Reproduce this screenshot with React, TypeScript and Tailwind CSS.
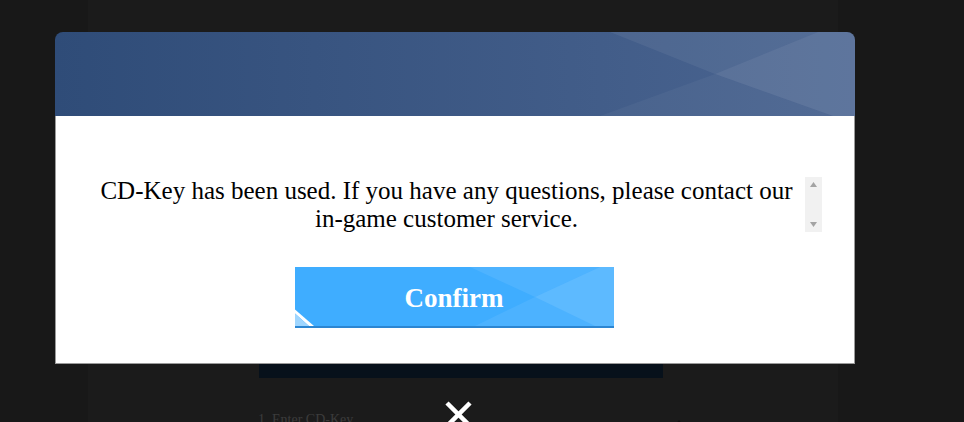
import React from 'react';

const serif = { fontFamily: '"Liberation Serif", "Times New Roman", serif' };

function HeaderPattern() {
  return (
    <svg className="absolute inset-0 h-full w-full" viewBox="0 0 800 84" preserveAspectRatio="none">
      <polygon points="555,0 763,0 660,42" fill="#ffffff" fillOpacity="0.06" />
      <polygon points="763,0 800,0 800,84 778,84 660,42" fill="#ffffff" fillOpacity="0.11" />
      <polygon points="545,84 778,84 660,42" fill="#ffffff" fillOpacity="0.04" />
    </svg>
  );
}

function ButtonPattern() {
  return (
    <svg className="absolute inset-0 h-full w-full" viewBox="0 0 319 61" preserveAspectRatio="none">
      <polygon points="175,0 305,0 240,31" fill="#ffffff" fillOpacity="0.08" />
      <polygon points="305,0 319,0 319,61 300,61 240,31" fill="#ffffff" fillOpacity="0.16" />
      <polygon points="180,61 300,61 240,31" fill="#ffffff" fillOpacity="0.07" />
      <polygon points="0,44 19,61 14,61 0,48" fill="#ffffff" />
      <polygon points="0,48 14,61 0,61" fill="#9fd6ff" />
    </svg>
  );
}

function FakeScrollbar() {
  return (
    <div className="flex h-[55px] w-[17px] shrink-0 flex-col items-center justify-between bg-[#f1f1f1] py-[5px]">
      <svg width="7" height="5" viewBox="0 0 7 5">
        <polygon points="3.5,0 7,5 0,5" fill="#a3a3a3" />
      </svg>
      <svg width="7" height="5" viewBox="0 0 7 5">
        <polygon points="0,0 7,0 3.5,5" fill="#a3a3a3" />
      </svg>
    </div>
  );
}

export default function App() {
  return (
    <div className="relative h-[422px] w-full overflow-hidden bg-[#181818]" style={serif}>
      {/* page behind the overlay */}
      <div className="ml-[88px] h-full w-[750px] bg-[#1b1b1b] pt-[240px]">
        <div className="ml-[171px] h-[138px] w-[404px] bg-[#07111b]" />
        <div className="ml-[170px] mt-[31px] flex w-[420px] items-center justify-between text-[14px] text-[#3c3c3c]">
          <span>1. Enter CD-Key</span>
          <span className="mr-[-6px] mt-[6px] h-0 w-0 border-x-[5px] border-b-[6px] border-x-transparent border-b-[#101010]" />
        </div>
      </div>

      {/* modal */}
      <div className="absolute left-[55px] top-[32px] w-[800px]">
        <div className="relative h-[84px] overflow-hidden rounded-t-[8px] bg-gradient-to-r from-[#2f4c78] to-[#4b6591]">
          <HeaderPattern />
        </div>
        <div className="flex h-[248px] flex-col items-center border-x border-b border-[#9a9a9a] bg-white px-[32px] pt-[61px]">
          <div className="flex w-full">
            <p className="flex-1 text-center text-[25px] leading-[28px] text-black">
              CD-Key has been used. If you have any questions, please contact our in-game customer service.
            </p>
            <FakeScrollbar />
          </div>
          <button className="relative mr-[2px] mt-[34px] h-[61px] w-[319px] overflow-hidden border-b-2 border-[#2c86d2] bg-[#3fadff] pt-[3px]">
            <ButtonPattern />
            <span className="relative text-[27px] font-bold text-white">Confirm</span>
          </button>
        </div>
      </div>

      {/* close */}
      <button className="absolute left-[444px] top-[400px]">
        <svg width="29" height="29" viewBox="0 0 29 29">
          <path d="M3 3 L26 26 M26 3 L3 26" stroke="#ffffff" strokeWidth="4.5" />
        </svg>
      </button>
    </div>
  );
}
